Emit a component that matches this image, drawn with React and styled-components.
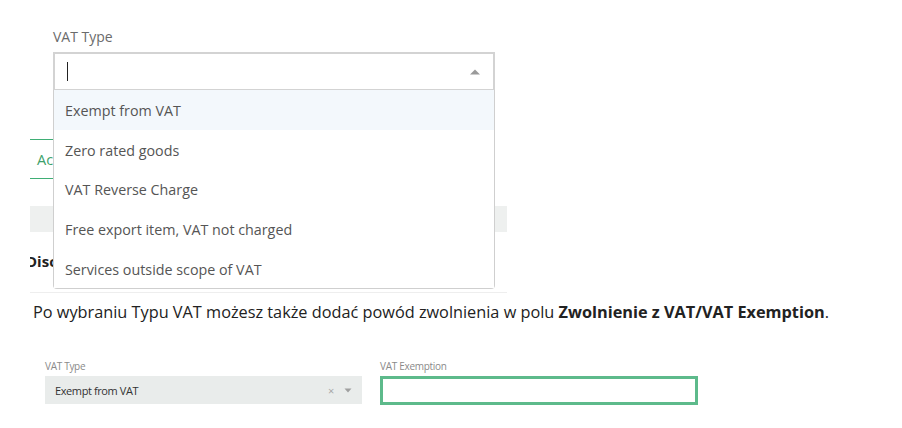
import React from "react";
import styled, { createGlobalStyle } from "styled-components";

const Global = createGlobalStyle`
  html, body { margin: 0; padding: 0; background: #fff; }
  body { font-family: "Open Sans", "Liberation Sans", sans-serif; }
`;

const Page = styled.div`
  width: 902px;
  height: 428px;
  display: flex;
  flex-direction: column;
  overflow: hidden;
`;

const TopShot = styled.div`
  position: relative;
  margin-left: 30px;
  width: 477px;
  height: 293px;
  overflow: hidden;
  border-bottom: 1px solid #eeeeee;
  box-sizing: border-box;
`;

const Backdrop = styled.div`
  display: flex;
  flex-direction: column;
  padding-top: 139px;
`;

const Tab = styled.div`
  width: 60px;
  height: 40px;
  box-sizing: border-box;
  border-top: 1px solid #3fae75;
  border-bottom: 1px solid #3fae75;
  display: flex;
  align-items: center;
  padding-left: 7px;
  color: #3d9f6a;
  font-size: 14.5px;
`;

const GreyBar = styled.div`
  margin-top: 27px;
  height: 26px;
  background: #eef0ef;
`;

const Heading = styled.div`
  margin-top: 19px;
  margin-left: -4px;
  font-size: 15px;
  font-weight: 700;
  color: #222;
`;

const Field = styled.div`
  position: absolute;
  left: 23px;
  top: 27px;
  width: 442px;
`;

const Label = styled.div`
  font-size: 14px;
  color: #6b6b6b;
  height: 25px;
`;

const SelectBox = styled.div`
  height: 38px;
  box-sizing: border-box;
  border: 2px solid #d3d3d3;
  border-bottom-width: 1px;
  background: #fff;
  display: flex;
  align-items: center;
  padding: 0 12px;
  justify-content: space-between;
`;

const Caret = styled.span`
  width: 1px;
  height: 19px;
  background: #222;
`;

const Menu = styled.ul`
  list-style: none;
  margin: 0;
  padding: 0;
  background: #fff;
  border: 1px solid #cfcfcf;
  border-top: none;
  border-radius: 0 0 4px 4px;
`;

const Item = styled.li`
  height: 39.6px;
  display: flex;
  align-items: center;
  padding: 2px 0 0 11px;
  box-sizing: border-box;
  font-size: 14.3px;
  color: #555;
  background: ${(p) => (p.$active ? "#f3f8fc" : "#fff")};
`;

const Para = styled.p`
  margin: 8px 0 0 33px;
  font-size: 16.3px;
  color: #222;
  line-height: 22px;
`;

const Bold = styled.b`
  font-weight: 700;
`;

const BottomShot = styled.div`
  margin: 36px 0 0 45px;
  display: flex;
  gap: 18px;
`;

const SmallField = styled.div`
  display: flex;
  flex-direction: column;
  width: ${(p) => p.$w}px;
`;

const SmallLabel = styled.div`
  font-size: 10px;
  color: #8a8a8a;
  height: 17px;
  letter-spacing: -0.3px;
`;

const GreyInput = styled.div`
  height: 28px;
  background: #e9eceb;
  display: flex;
  align-items: center;
  padding: 0 10px;
  font-size: 11px;
  color: #333;
  letter-spacing: -0.4px;
`;

const Grow = styled.span`
  flex: 1;
`;

const Clear = styled.span`
  color: #a8a8a8;
  font-size: 11px;
  margin-right: 10px;
`;

const GreenInput = styled.div`
  height: 29px;
  box-sizing: border-box;
  border: 3px solid #5dba8b;
  background: #fff;
`;

const items = [
  "Exempt from VAT",
  "Zero rated goods",
  "VAT Reverse Charge",
  "Free export item, VAT not charged",
  "Services outside scope of VAT",
];

export default function App() {
  return (
    <Page>
      <Global />
      <TopShot>
        <Backdrop>
          <Tab>Ac</Tab>
          <GreyBar />
          <Heading>Disc</Heading>
        </Backdrop>
        <Field>
          <Label>VAT Type</Label>
          <SelectBox>
            <Caret />
            <svg width="12" height="7" viewBox="0 0 12 7">
              <path d="M1 6.5 L6 1.5 L11 6.5 Z" fill="#9a9a9a" />
            </svg>
          </SelectBox>
          <Menu>
            {items.map((t, i) => (
              <Item key={t} $active={i === 0}>
                {t}
              </Item>
            ))}
          </Menu>
        </Field>
      </TopShot>
      <Para>
        Po wybraniu Typu VAT możesz także dodać powód zwolnienia w polu{" "}
        <Bold>Zwolnienie z VAT/VAT Exemption</Bold>.
      </Para>
      <BottomShot>
        <SmallField $w={317}>
          <SmallLabel>VAT Type</SmallLabel>
          <GreyInput>
            <Grow>Exempt from VAT</Grow>
            <Clear>×</Clear>
            <svg width="8" height="5" viewBox="0 0 8 5">
              <path d="M0.5 0.5 L7.5 0.5 L4 4.5 Z" fill="#a0a0a0" />
            </svg>
          </GreyInput>
        </SmallField>
        <SmallField $w={318}>
          <SmallLabel>VAT Exemption</SmallLabel>
          <GreenInput />
        </SmallField>
      </BottomShot>
    </Page>
  );
}
